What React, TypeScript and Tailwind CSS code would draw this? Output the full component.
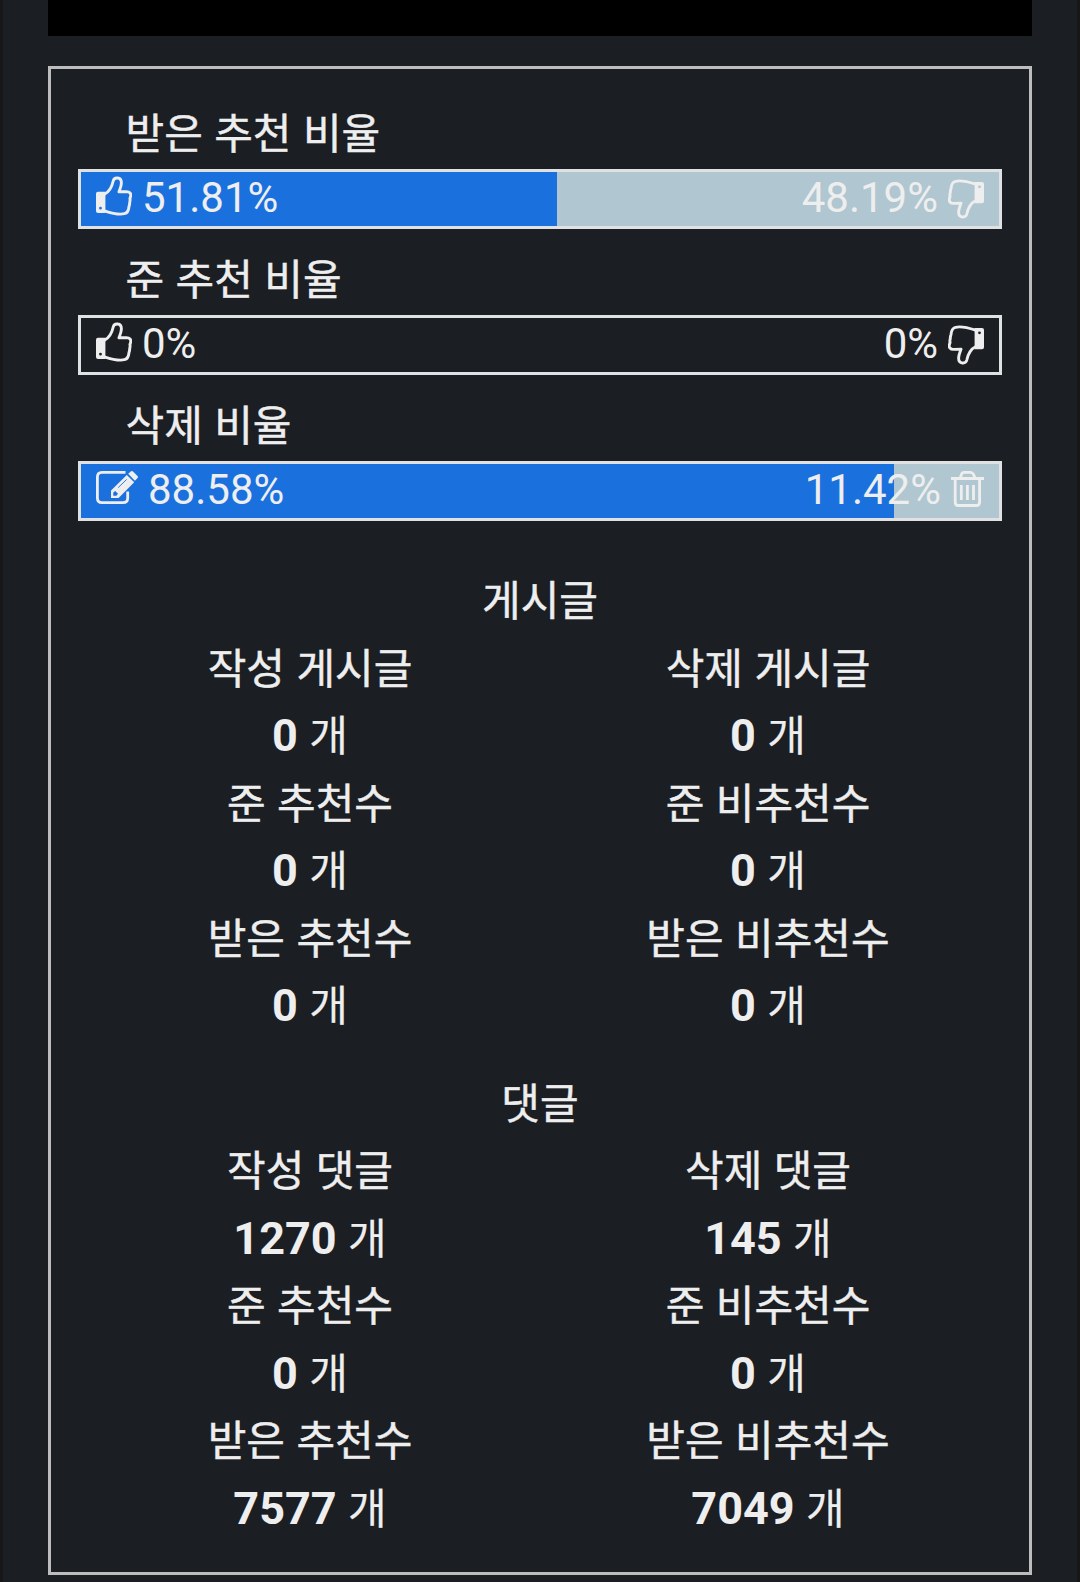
import type { ReactNode } from "react";

interface RatioItem {
  label: string;
  left: number;
  right: number;
  kind: "vote" | "delete";
}

interface StatItem {
  label: string;
  value: number;
}

const ratios: RatioItem[] = [
  { label: "받은 추천 비율", left: 51.81, right: 48.19, kind: "vote" },
  { label: "준 추천 비율", left: 0, right: 0, kind: "vote" },
  { label: "삭제 비율", left: 88.58, right: 11.42, kind: "delete" },
];

const posts: StatItem[] = [
  { label: "작성 게시글", value: 0 },
  { label: "삭제 게시글", value: 0 },
  { label: "준 추천수", value: 0 },
  { label: "준 비추천수", value: 0 },
  { label: "받은 추천수", value: 0 },
  { label: "받은 비추천수", value: 0 },
];

const comments: StatItem[] = [
  { label: "작성 댓글", value: 1270 },
  { label: "삭제 댓글", value: 145 },
  { label: "준 추천수", value: 0 },
  { label: "준 비추천수", value: 0 },
  { label: "받은 추천수", value: 7577 },
  { label: "받은 비추천수", value: 7049 },
];

function ThumbIcon({ className }: { className: string }) {
  return (
    <svg viewBox="0 0 36 40" className={`h-10 w-9 shrink-0 ${className}`} fill="none" aria-hidden>
      <path
        fillRule="evenodd"
        fill="currentColor"
        d="M2 15.8H9.4V37H2Q0 37 0 35V17.8Q0 15.8 2 15.8ZM4.5 30.8a1.4 1.4 0 1 0 0 2.8a1.4 1.4 0 1 0 0-2.8Z"
      />
      <path
        stroke="currentColor"
        strokeWidth="2.9"
        strokeLinejoin="round"
        d="M8.5 18.2C13 16 16 10.5 17.2 5C18.2 .9 25.4 .6 25.4 7C25.3 10.3 24.2 12.5 23 15.8L30.5 15.6C33.8 15.6 35.3 17.8 34.6 20.3Q34.3 21.8 33.9 22.4Q34.4 23.8 33.7 26.7Q33.7 28.5 33 30.5C32.6 35 31.5 37 28.5 37.7C22.5 39 16.5 37.5 8.5 34.8"
      />
    </svg>
  );
}

function EditIcon() {
  return (
    <svg viewBox="0 0 42 34" className="h-[34px] w-[42px] shrink-0" fill="none" aria-hidden>
      <path
        stroke="currentColor"
        strokeWidth="2.8"
        d="M29.5 2.3H6Q1.4 2.3 1.4 7V28Q1.4 32.6 6 32.6H27Q31.7 32.6 31.7 28V21.5"
      />
      <path
        fillRule="evenodd"
        fill="currentColor"
        d="M15 28V20.5L30.8 5L38.2 12.3L22.6 28ZM17.3 22.4V25.7L20.4 25.8L22 23.8L19.2 21Z"
      />
      <path fill="currentColor" d="M32.2 3.8L35 1.3Q36 .6 37 1.4L41.5 6Q42.3 7 41.6 8L38.9 10.8Z" />
      <path stroke="#1a71de" strokeWidth=".9" d="M22.2 17.6L30.7 9.4" />
    </svg>
  );
}

function TrashIcon() {
  return (
    <svg viewBox="0 0 33 36" className="h-9 w-[33px] shrink-0" fill="none" stroke="currentColor" strokeWidth="2.8" aria-hidden>
      <path d="M0 7.5H33" />
      <path d="M9.3 7L10.4 3.6Q11.1 1.4 13.2 1.4H19.5Q21.5 1.4 22.5 3.4L24 7" />
      <path d="M4.2 8V31.2Q4.2 34.5 7.5 34.5H25.3Q28.6 34.5 28.6 31.2V8" />
      <path d="M10.3 14V29M16.4 14V29M22.5 14V29" />
    </svg>
  );
}

function Side({ children }: { children: ReactNode }) {
  return <span className="flex items-center gap-2.5">{children}</span>;
}

function RatioBar({ left, right, kind }: RatioItem) {
  const empty = left + right === 0;
  const isVote = kind === "vote";

  return (
    <div className={`grid h-[60px] border-[3px] border-[#dfe1e3] ${empty ? "" : "bg-[#b0c6d0]"}`}>
      <div className="col-start-1 row-start-1 bg-[#1a71de]" style={{ width: `${left}%` }} />
      <div className="z-10 col-start-1 row-start-1 flex items-center justify-between px-[15px] text-[42px] leading-[54px]">
        <Side>
          {isVote ? <ThumbIcon className="-mt-[7px]" /> : <span className="-mt-2"><EditIcon /></span>}
          <span className="-mt-0.5">{left}%</span>
        </Side>
        <Side>
          <span className="-mt-0.5">{right}%</span>
          {isVote ? <ThumbIcon className="rotate-180" /> : <span className="-mt-1"><TrashIcon /></span>}
        </Side>
      </div>
    </div>
  );
}

function StatSection({ title, items }: { title: string; items: StatItem[] }) {
  return (
    <section className="text-center text-[42px] leading-[67.5px] [word-spacing:1px]">
      <h2 className="[-webkit-text-stroke:0.45px]">{title}</h2>
      <dl className="grid grid-cols-2 pr-[5px] pl-[3px]">
        {items.map((item) => (
          <div key={item.label}>
            <dt className="[-webkit-text-stroke:0.45px]">{item.label}</dt>
            <dd className="h-[67.5px] leading-[65.5px]">
              <b className="text-[45px] font-bold">{item.value}</b>
              <span className="[-webkit-text-stroke:0.2px]"> 개</span>
            </dd>
          </div>
        ))}
      </dl>
    </section>
  );
}

export default function App() {
  return (
    <div className="h-[1582px] w-[1080px] overflow-hidden border-x-[3px] border-[#171717] bg-[#1b1e23] px-[45px] font-[Roboto,'Noto_Sans_CJK_KR',sans-serif] text-[#eeeeee]">
      <div className="h-9 bg-black" />
      <main className="mt-[30px] h-[1509px] border-[3px] border-[#bdbdbd] px-[27px] pt-[32px]">
        <div className="flex flex-col gap-[18px]">
          {ratios.map((ratio) => (
            <section key={ratio.label}>
              <h2 className="h-[68px] pl-[47.5px] text-[42px] leading-[68px] [word-spacing:1px] [-webkit-text-stroke:0.45px]">
                {ratio.label}
              </h2>
              <RatioBar {...ratio} />
            </section>
          ))}
        </div>
        <div className="mt-[47px] flex flex-col gap-[30px]">
          <StatSection title="게시글" items={posts} />
          <StatSection title="댓글" items={comments} />
        </div>
      </main>
    </div>
  );
}
